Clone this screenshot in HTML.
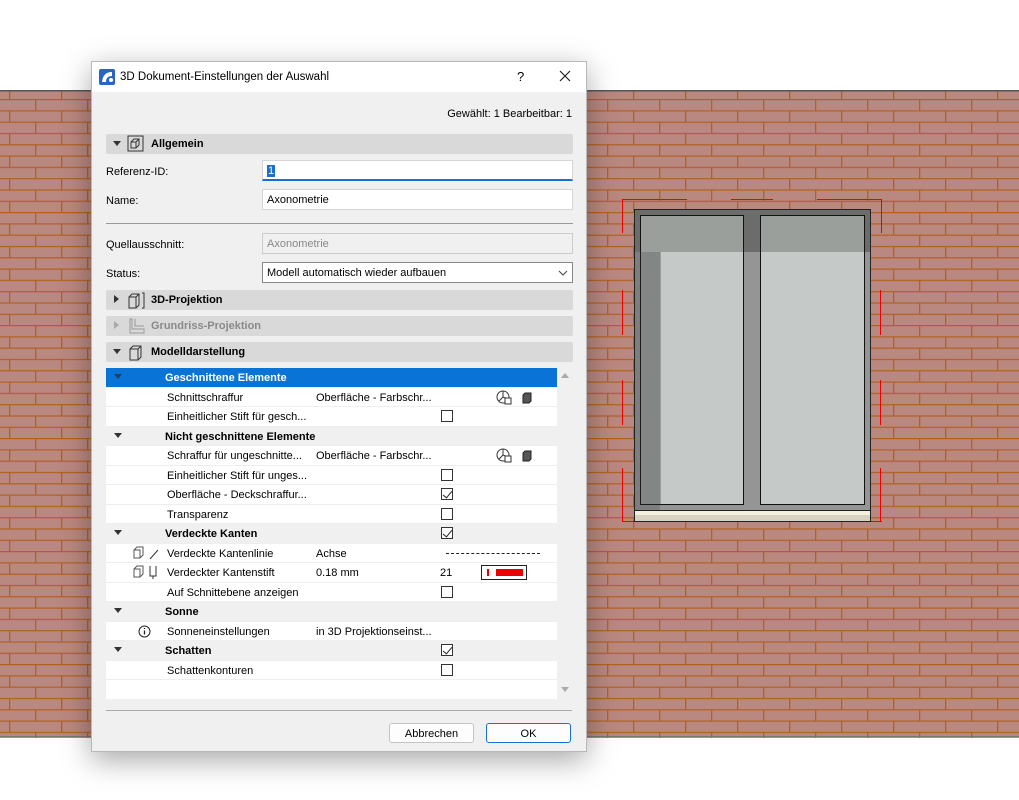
<!DOCTYPE html>
<html><head><meta charset="utf-8"><style>
*{box-sizing:border-box;margin:0;padding:0}
body{width:1019px;height:800px;background:#fff;position:relative;overflow:hidden;font-family:"Liberation Sans",sans-serif;font-size:11px;color:#000}
.abs{position:absolute}
#dlg{position:absolute;left:91px;top:61px;width:496px;height:691px;background:#f0f0f0;border:1px solid #b9b9b9;box-shadow:0 8px 28px rgba(0,0,0,.35)}
.title{position:absolute;left:0;top:0;width:494px;height:30px;background:#fff;}
.sec{position:absolute;left:14px;width:467px;height:20px;background:#d9d9d9;border-radius:2px;font-weight:bold}
.sec span{position:absolute;left:45px;top:4px}
.tri{position:absolute;left:7px;top:7px;width:0;height:0;border-left:4px solid transparent;border-right:4px solid transparent;border-top:5px solid #333}
.trr{position:absolute;left:8px;top:5px;width:0;height:0;border-top:4px solid transparent;border-bottom:4px solid transparent;border-left:5px solid #333}
.inp{position:absolute;left:170px;width:311px;height:21px;background:#fff;border:1px solid #d5d5d5;padding:4px 4px}
.lbl{position:absolute;left:14px}
.row{position:absolute;left:14px;width:451px;height:19.5px;background:#fff;border-bottom:1px solid #eee}
.row.g{background:#f0f0f0;font-weight:bold}
.row span{position:absolute;top:4px}
.cb{position:absolute;left:335px;top:3px;width:12px;height:12px;border:1px solid #333;background:#fff}
.cb.c::after{content:"";position:absolute;left:3px;top:0px;width:4px;height:8px;border-right:1.5px solid #222;border-bottom:1.5px solid #222;transform:rotate(40deg)}
.btn{position:absolute;top:661px;height:20px;width:85px;background:#fdfdfd;border:1px solid #c4c4c4;border-radius:3px;text-align:center;padding-top:4px}
.r{position:absolute;background:#e00}
</style></head><body>
<svg class="abs" style="left:0;top:90px" width="1019" height="648">
<defs><pattern id="b" width="52" height="22.6" patternUnits="userSpaceOnUse" x="-17" y="9">
<rect width="52" height="22.6" fill="#b98880"/>
<rect y="0" width="52" height="1.2" fill="#b4601f"/>
<rect y="11.3" width="52" height="1.2" fill="#b4601f"/>
<rect x="0" y="0" width="1.3" height="11.3" fill="#b4601f"/>
<rect x="26" y="11.3" width="1.3" height="11.3" fill="#b4601f"/>
</pattern></defs>
<rect width="1019" height="648" fill="url(#b)"/>
<rect width="1019" height="1.5" fill="#555"/>
<rect y="646" width="1019" height="1" fill="#777"/>
</svg>
<!-- window -->
<div class="r" style="left:622px;top:199px;width:1px;height:34px"></div>
<div class="r" style="left:622px;top:199px;width:65px;height:1px"></div>
<div class="r" style="left:731px;top:199px;width:42px;height:1px"></div>
<div class="r" style="left:817px;top:199px;width:65px;height:1px"></div>
<div class="r" style="left:881px;top:199px;width:1px;height:34px"></div>
<div class="r" style="left:622px;top:290px;width:1px;height:45px"></div>
<div class="r" style="left:880px;top:290px;width:1px;height:45px"></div>
<div class="r" style="left:622px;top:380px;width:1px;height:45px"></div>
<div class="r" style="left:880px;top:380px;width:1px;height:45px"></div>
<div class="r" style="left:622px;top:468px;width:1px;height:54px"></div>
<div class="r" style="left:880px;top:468px;width:1px;height:54px"></div>
<div class="r" style="left:622px;top:521px;width:260px;height:1px"></div>
<div class="abs" style="left:634px;top:209px;width:237px;height:303px;background:#959595;border:1px solid #222"></div>
<div class="abs" style="left:635px;top:210px;width:235px;height:42px;background:#6c6c6c"></div>
<div class="abs" style="left:640px;top:215px;width:104px;height:290px;background:#c5cac8;border:1.5px solid #111"></div>
<div class="abs" style="left:760px;top:215px;width:105px;height:290px;background:#c5cac8;border:1.5px solid #111"></div>
<div class="abs" style="left:641px;top:216px;width:102px;height:36px;background:#9a9f9c"></div>
<div class="abs" style="left:761px;top:216px;width:103px;height:36px;background:#9a9f9c"></div>
<div class="abs" style="left:641px;top:252px;width:20px;height:252px;background:#9a9f9c"></div>
<div class="abs" style="left:635px;top:252px;width:25px;height:258px;background:rgba(60,60,60,.25)"></div>
<div class="abs" style="left:634px;top:510px;width:237px;height:12px;background:#f3efdf;border:1px solid #222;border-top:1.5px solid #222"></div>
<div class="abs" style="left:635px;top:515px;width:235px;height:6px;background:#d9d2c2"></div>

<div id="dlg">
<div class="title">
<svg class="abs" style="left:7px;top:7px" width="16" height="16"><rect width="16" height="16" rx="2" fill="#2d63c8"/><path d="M3 13 Q4 3 13 3 L13 7 Q7 7 7 13Z" fill="#fff"/><circle cx="12" cy="11" r="2" fill="#fff"/></svg>
<span class="abs" style="left:28px;top:9px;font-size:11.5px">3D Dokument-Einstellungen der Auswahl</span>
<span class="abs" style="left:425px;top:7px;font-size:13px">?</span>
<svg class="abs" style="left:467px;top:8px" width="12" height="12"><path d="M1 1L11 11M11 1L1 11" stroke="#222" stroke-width="1.2"/></svg>
</div>
<span class="abs" style="right:14px;top:46px">Gewählt: 1 Bearbeitbar: 1</span>
<div class="sec" style="top:72px"><div class="tri"></div>
<svg class="abs" style="left:21px;top:1px" width="18" height="18"><rect x="1" y="1" width="15" height="15" fill="none" stroke="#333"/><path d="M4 7l3-3h5v6l-3 3H4z M4 7h5v6 M9 7l3-3" fill="none" stroke="#333"/></svg><span>Allgemein</span></div>
<span class="lbl" style="top:104px">Referenz-ID:</span>
<div class="inp" style="top:98px;border-bottom:2px solid #1a6fd0"><span style="background:#1a6fd0;color:#fff;padding:0 1px">1</span></div>
<span class="lbl" style="top:133px">Name:</span>
<div class="inp" style="top:127px">Axonometrie</div>
<div class="abs" style="left:14px;top:161px;width:467px;height:1px;background:#999"></div>
<span class="lbl" style="top:177px">Quellausschnitt:</span>
<div class="inp" style="top:171px;background:#f0f0f0;color:#888;border-color:#ccc">Axonometrie</div>
<span class="lbl" style="top:206px">Status:</span>
<div class="inp" style="top:200px;border-color:#888">Modell automatisch wieder aufbauen
<svg class="abs" style="right:4px;top:7px" width="10" height="6"><path d="M1 1l4 4 4-4" fill="none" stroke="#444"/></svg></div>
<div class="sec" style="top:228px"><div class="trr"></div>
<svg class="abs" style="left:21px;top:1px" width="20" height="18"><path d="M2 6l3-3h7v11l-3 3H2z M2 6h7v11 M9 6l3-3 M15 2h2v15h-2" fill="none" stroke="#333"/></svg><span>3D-Projektion</span></div>
<div class="sec" style="top:254px;color:#8a8a8a"><div class="trr" style="border-left-color:#aaa"></div>
<svg class="abs" style="left:21px;top:1px" width="20" height="18"><path d="M5 2v10h12v4H3V2z M8 2v7h9" fill="none" stroke="#999"/></svg><span>Grundriss-Projektion</span></div>
<div class="sec" style="top:280px"><div class="tri"></div>
<svg class="abs" style="left:21px;top:1px" width="18" height="18"><path d="M3 6l3-3h8v11l-3 3H3z M3 6h8v11 M11 6l3-3" fill="none" stroke="#333"/></svg><span>Modelldarstellung</span></div>

<div class="abs" style="left:14px;top:306px;width:467px;height:331px;background:#fff"></div>
<div class="abs" style="left:465px;top:306px;width:16px;height:331px;background:#f0f0f0"></div>
<div class="abs" style="left:469px;top:311px;border-left:4px solid transparent;border-right:4px solid transparent;border-bottom:5px solid #aaa"></div>
<div class="abs" style="left:469px;top:625px;border-left:4px solid transparent;border-right:4px solid transparent;border-top:5px solid #aaa"></div>

<div class="row g" style="top:306px;background:#0a74d6;color:#fff"><div class="tri" style="border-top-color:#1b3f6a;left:8px;top:6px"></div><span style="left:59px">Geschnittene Elemente</span></div>
<div class="row" style="top:325.5px"><span style="left:61px">Schnittschraffur</span><span style="left:210px">Oberfläche - Farbschr...</span>
<svg class="abs" style="left:390px;top:2px" width="40" height="16"><circle cx="7" cy="7" r="6" fill="none" stroke="#333"/><path d="M7 1v6l-4 4M7 7l5 2" stroke="#333" fill="none"/><rect x="9" y="8" width="6" height="6" fill="#fff" stroke="#333"/><path d="M27 5l2-2h6v8l-2 2h-6z" fill="#555" stroke="#222"/></svg></div>
<div class="row" style="top:345px"><span style="left:61px">Einheitlicher Stift für gesch...</span><div class="cb"></div></div>
<div class="row g" style="top:364.5px"><div class="tri" style="left:8px;top:6px"></div><span style="left:59px">Nicht geschnittene Elemente</span></div>
<div class="row" style="top:384px"><span style="left:61px">Schraffur für ungeschnitte...</span><span style="left:210px">Oberfläche - Farbschr...</span>
<svg class="abs" style="left:390px;top:2px" width="40" height="16"><circle cx="7" cy="7" r="6" fill="none" stroke="#333"/><path d="M7 1v6l-4 4M7 7l5 2" stroke="#333" fill="none"/><rect x="9" y="8" width="6" height="6" fill="#fff" stroke="#333"/><path d="M27 5l2-2h6v8l-2 2h-6z" fill="#555" stroke="#222"/></svg></div>
<div class="row" style="top:403.5px"><span style="left:61px">Einheitlicher Stift für unges...</span><div class="cb"></div></div>
<div class="row" style="top:423px"><span style="left:61px">Oberfläche - Deckschraffur...</span><div class="cb c"></div></div>
<div class="row" style="top:442.5px"><span style="left:61px">Transparenz</span><div class="cb"></div></div>
<div class="row g" style="top:462px"><div class="tri" style="left:8px;top:6px"></div><span style="left:59px">Verdeckte Kanten</span><div class="cb c"></div></div>
<div class="row" style="top:481.5px">
<svg class="abs" style="left:27px;top:2px" width="30" height="15"><path d="M1 4l3-3h6v8l-3 3H1z M1 4h6v8" fill="none" stroke="#555"/><path d="M17 13l8-9" stroke="#333"/></svg>
<span style="left:61px">Verdeckte Kantenlinie</span><span style="left:210px">Achse</span>
<div class="abs" style="left:340px;top:9px;width:94px;border-top:1px dashed #222"></div></div>
<div class="row" style="top:501px">
<svg class="abs" style="left:27px;top:2px" width="30" height="15"><path d="M1 4l3-3h6v8l-3 3H1z M1 4h6v8" fill="none" stroke="#555"/><path d="M17 1v10h6v-10 M20 11v3" fill="none" stroke="#333"/></svg>
<span style="left:61px">Verdeckter Kantenstift</span><span style="left:210px">0.18 mm</span><span style="left:334px">21</span>
<div class="abs" style="left:375px;top:2px;width:46px;height:15px;border:1.5px solid #222;background:#fff"><div class="abs" style="left:5px;top:3px;width:2px;height:7px;background:#e00"></div><div class="abs" style="left:14px;top:3px;width:27px;height:7px;background:#e00"></div></div></div>
<div class="row" style="top:520.5px"><span style="left:61px">Auf Schnittebene anzeigen</span><div class="cb"></div></div>
<div class="row g" style="top:540px"><div class="tri" style="left:8px;top:6px"></div><span style="left:59px">Sonne</span></div>
<div class="row" style="top:559.5px"><svg class="abs" style="left:32px;top:3px" width="13" height="13"><circle cx="6.5" cy="6.5" r="5.5" fill="none" stroke="#222"/><path d="M6.5 5.5v4M6.5 3v1" stroke="#222" stroke-width="1.3"/></svg><span style="left:61px">Sonneneinstellungen</span><span style="left:210px">in 3D Projektionseinst...</span></div>
<div class="row g" style="top:579px"><div class="tri" style="left:8px;top:6px"></div><span style="left:59px">Schatten</span><div class="cb c"></div></div>
<div class="row" style="top:598.5px"><span style="left:61px">Schattenkonturen</span><div class="cb"></div></div>

<div class="abs" style="left:14px;top:648px;width:466px;height:1px;background:#aaa"></div>
<div class="btn" style="left:297px">Abbrechen</div>
<div class="btn" style="left:394px;border:1.5px solid #1a6fd0">OK</div>
</div>
</body></html>
